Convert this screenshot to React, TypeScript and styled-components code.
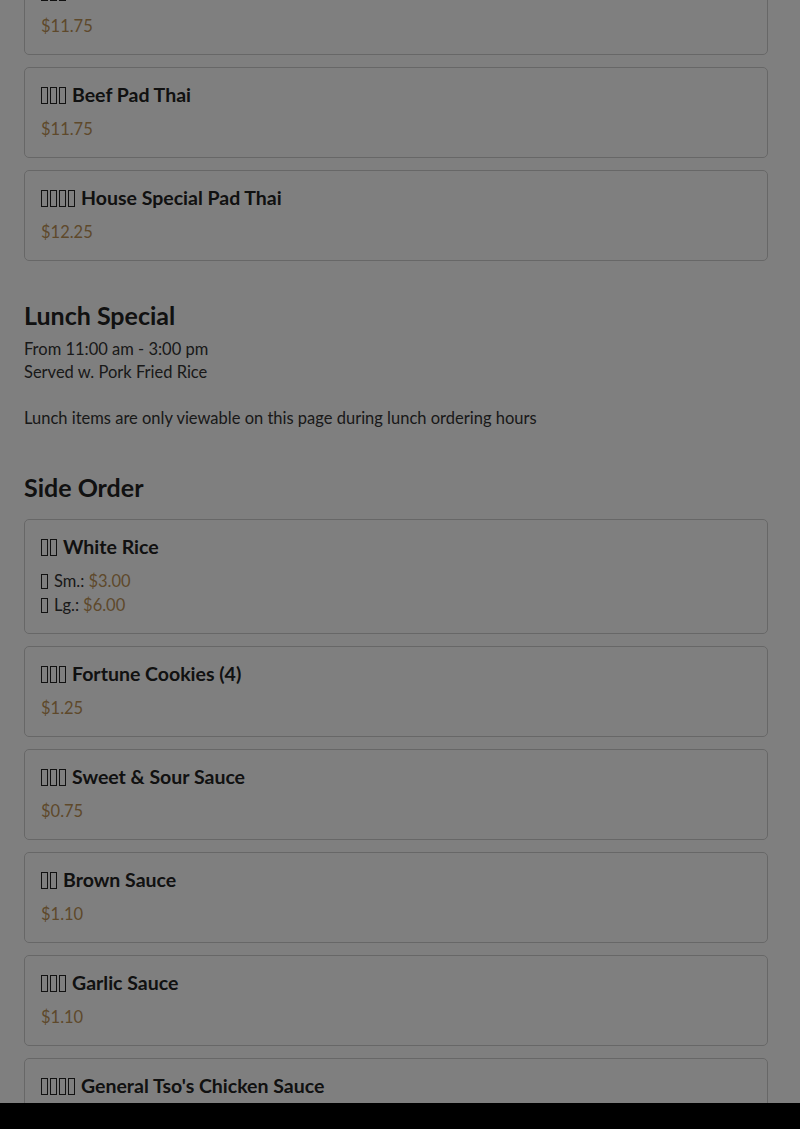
import React from "react";
import styled, { createGlobalStyle } from "styled-components";

const GlobalStyle = createGlobalStyle`
  html, body {
    margin: 0;
    padding: 0;
    background: #ffffff;
    overflow: hidden;
  }
  body {
    font-family: Lato, "Noto Sans", "Liberation Sans", sans-serif;
    color: #333333;
  }
`;

const StyledPage = styled.div`
  display: flex;
  flex-direction: column;
  padding: 0 32px 0 24px;
  margin-top: -36px;
`;

const StyledSection = styled.section`
  display: flex;
  flex-direction: column;
  & + & {
    margin-top: 39px;
  }
`;

const StyledSectionTitle = styled.h2`
  margin: 0 0 8px;
  font-size: 25px;
  line-height: 30px;
  font-weight: 700;
  color: #222222;
`;

const StyledNote = styled.p`
  margin: 0;
  font-size: 16.5px;
  line-height: 23px;
  color: #333333;
  & + & {
    margin-top: 23px;
  }
  &:last-child {
    padding-bottom: 3px;
  }
`;

const StyledList = styled.div<{ $flush?: boolean }>`
  display: flex;
  flex-direction: column;
  gap: 12px;
  margin-top: ${(p) => (p.$flush ? 0 : 9)}px;
`;

const StyledCard = styled.div`
  border: 1px solid #cfcfcf;
  border-radius: 5px;
  padding: 16px 16px 16px;
  display: flex;
  flex-direction: column;
  gap: 11px;
  background: #ffffff;
`;

const StyledItemName = styled.div`
  display: flex;
  align-items: center;
  font-size: 19.5px;
  line-height: 22px;
  font-weight: 700;
  color: #222222;
`;

const StyledPrices = styled.div`
  display: flex;
  flex-direction: column;
`;

const StyledPriceRow = styled.div`
  display: flex;
  align-items: center;
  font-size: 16.5px;
  line-height: 24px;
  color: #333333;
`;

const StyledPrice = styled.span`
  color: #bd9256;
  margin-left: 4px;
  &:first-child {
    margin-left: 0;
  }
`;

// the page's CJK names show up as missing-glyph boxes in the reference
const StyledGlyph = styled.span<{ $small?: boolean }>`
  display: inline-block;
  box-sizing: border-box;
  width: 7px;
  height: ${(p) => (p.$small ? 15 : 17)}px;
  border: 1px solid #222222;
  margin-right: 2px;
`;

const StyledGlyphs = styled.span`
  display: inline-flex;
  align-items: center;
  margin-right: 4px;
`;

const StyledOverlay = styled.div`
  position: fixed;
  inset: 0;
  background: rgba(0, 0, 0, 0.5);
`;

const StyledBottomBar = styled.div`
  position: fixed;
  left: 0;
  right: 0;
  bottom: 0;
  height: 26px;
  background: #000000;
`;

type Price = { label?: string; tag?: string; value: string };
type Item = { zh: string; name: string; prices: Price[] };

const padThai: Item[] = [
  { zh: "鸡炒河", name: "Chicken Pad Thai", prices: [{ value: "$11.75" }] },
  { zh: "牛炒河", name: "Beef Pad Thai", prices: [{ value: "$11.75" }] },
  { zh: "本楼炒河", name: "House Special Pad Thai", prices: [{ value: "$12.25" }] },
];

const sides: Item[] = [
  {
    zh: "白饭",
    name: "White Rice",
    prices: [
      { tag: "小", label: "Sm.:", value: "$3.00" },
      { tag: "大", label: "Lg.:", value: "$6.00" },
    ],
  },
  { zh: "幸运饼", name: "Fortune Cookies (4)", prices: [{ value: "$1.25" }] },
  { zh: "甜酸酱", name: "Sweet & Sour Sauce", prices: [{ value: "$0.75" }] },
  { zh: "黄酱", name: "Brown Sauce", prices: [{ value: "$1.10" }] },
  { zh: "蒜蓉酱", name: "Garlic Sauce", prices: [{ value: "$1.10" }] },
  { zh: "左宗鸡酱", name: "General Tso's Chicken Sauce", prices: [{ value: "$1.10" }] },
];

function Missing({ text, small }: { text: string; small?: boolean }) {
  return (
    <StyledGlyphs title={text}>
      {Array.from(text).map((c, i) => (
        <StyledGlyph key={i} $small={small} />
      ))}
    </StyledGlyphs>
  );
}

function MenuCard({ item }: { item: Item }) {
  return (
    <StyledCard>
      <StyledItemName>
        <Missing text={item.zh} />
        {item.name}
      </StyledItemName>
      <StyledPrices>
        {item.prices.map((p, i) => (
          <StyledPriceRow key={i}>
            {p.tag && <Missing text={p.tag} small />}
            {p.label}
            <StyledPrice>{p.value}</StyledPrice>
          </StyledPriceRow>
        ))}
      </StyledPrices>
    </StyledCard>
  );
}

export default function App() {
  return (
    <>
      <GlobalStyle />
      <StyledPage>
        <StyledSection>
          <StyledList $flush>
            {padThai.map((item) => (
              <MenuCard key={item.name} item={item} />
            ))}
          </StyledList>
        </StyledSection>
        <StyledSection>
          <StyledSectionTitle>Lunch Special</StyledSectionTitle>
          <StyledNote>
            From 11:00 am - 3:00 pm
            <br />
            Served w. Pork Fried Rice
          </StyledNote>
          <StyledNote>Lunch items are only viewable on this page during lunch ordering hours</StyledNote>
        </StyledSection>
        <StyledSection>
          <StyledSectionTitle>Side Order</StyledSectionTitle>
          <StyledList>
            {sides.map((item) => (
              <MenuCard key={item.name} item={item} />
            ))}
          </StyledList>
        </StyledSection>
      </StyledPage>
      <StyledOverlay />
      <StyledBottomBar />
    </>
  );
}
